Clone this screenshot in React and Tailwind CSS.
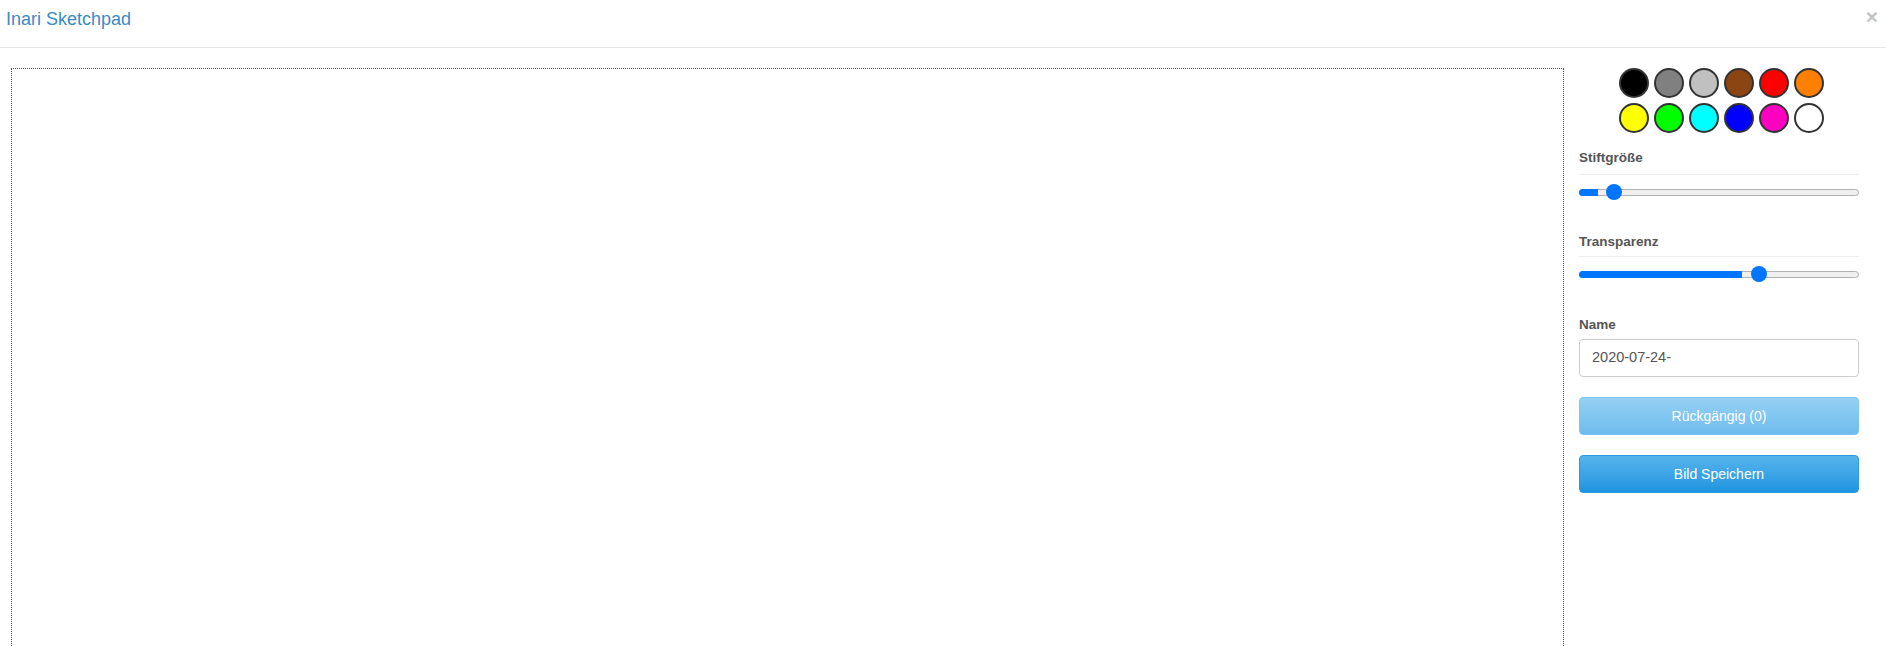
import React from 'react';

const colors = [
  ['#000000', '#808080', '#c0c0c0', '#8b4513', '#ff0000', '#ff8000'],
  ['#ffff00', '#00ff00', '#00ffff', '#0000ff', '#ff00c0', '#ffffff'],
];

function Slider({ thumbLeft, fillWidth }) {
  return (
    <div className="h-[34px] flex items-center">
      <div className="relative w-full h-[7px] rounded-full bg-[#efefef] border border-[#b2b2b2]">
        <div
          className="absolute left-[-1px] top-[-1px] h-[7px] rounded-l-full bg-[#0075ff]"
          style={{ width: fillWidth }}
        />
        <div
          className="absolute top-[-5.5px] w-[16px] h-[16px] rounded-full bg-[#0075ff]"
          style={{ left: thumbLeft }}
        />
      </div>
    </div>
  );
}

function Label({ children, className = '' }) {
  return (
    <div className={`text-[13.5px] leading-[20px] font-bold text-[#555] ${className}`}>
      {children}
    </div>
  );
}

export default function App() {
  return (
    <div className="w-[1886px] h-[646px] overflow-hidden bg-white" style={{ fontFamily: '"Liberation Sans", Arial, sans-serif' }}>
      {/* Header */}
      <div className="h-[48px] border-b border-[#e5e5e5] flex justify-between pl-[6px] pr-[8px] pt-[9px]">
        <div className="text-[18px] leading-[20px] text-[#3b8bc2]">Inari Sketchpad</div>
        <div className="text-[21px] leading-[20px] font-bold text-[#c4c4c4] -mt-[2px]">×</div>
      </div>

      {/* Body */}
      <div className="flex pl-[11px] pt-[20px]">
        <div className="w-[1553px] h-[620px] border border-dotted border-[#555] shrink-0" />

        <div className="ml-[15px] w-[280px] flex flex-col">
          <div className="flex flex-col items-center gap-[5px] pl-[4px]">
            {colors.map((row, i) => (
              <div key={i} className="flex gap-[5px]">
                {row.map((c) => (
                  <div
                    key={c}
                    className="w-[30px] h-[30px] rounded-full border-2 border-[#333]"
                    style={{ backgroundColor: c }}
                  />
                ))}
              </div>
            ))}
          </div>

          <Label className="mt-[15px]">Stiftgröße</Label>
          <div className="mt-[6px] border-t border-[#eeeeee]" />
          <Slider thumbLeft={26} fillWidth={19} />

          <Label className="mt-[23px]">Transparenz</Label>
          <div className="mt-[4px] border-t border-[#eeeeee]" />
          <Slider thumbLeft={171} fillWidth={163} />

          <Label className="mt-[24px]">Name</Label>
          <div className="mt-[4px] h-[38px] rounded-[4px] border border-[#cccccc] flex items-center px-[12px] text-[14.5px] text-[#555]">
            2020-07-24-
          </div>

          <div className="mt-[20px] h-[38px] rounded-[4px] border border-[#7fc4ef] bg-gradient-to-b from-[#95d0f3] to-[#6ebcee] flex items-center justify-center text-[14px] text-white">
            Rückgängig (0)
          </div>
          <div className="mt-[20px] h-[38px] rounded-[4px] border border-[#2a9ae2] bg-gradient-to-b from-[#55b4eb] to-[#1d94e0] flex items-center justify-center text-[14px] text-white">
            Bild Speichern
          </div>
        </div>
      </div>
    </div>
  );
}
